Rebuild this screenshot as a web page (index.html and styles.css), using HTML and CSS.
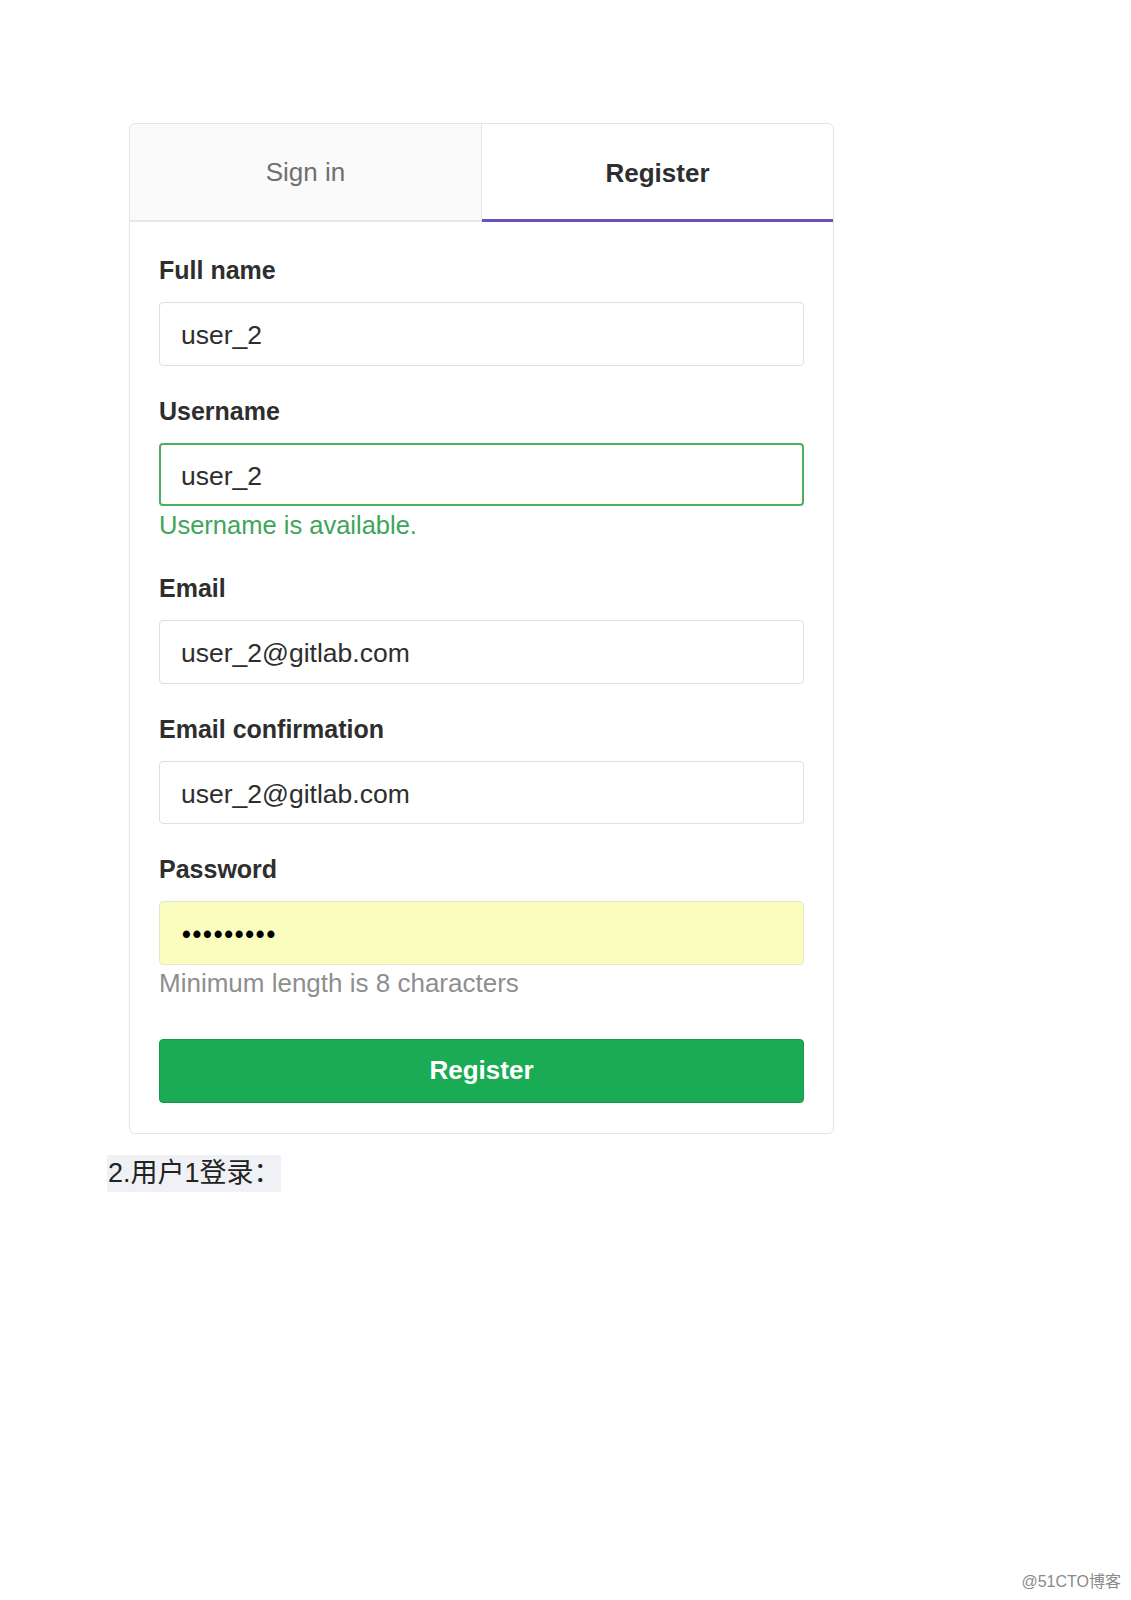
FILE: index.html
```html
<!DOCTYPE html>
<html lang="zh-CN">
<head>
<meta charset="utf-8">
<title>Register</title>
<link rel="stylesheet" href="styles.css">
</head>
<body>
<div class="page">
  <div class="card">
    <div class="tabs">
      <div class="tab tab-inactive">Sign in</div>
      <div class="tab tab-active">Register</div>
    </div>
    <form class="form">
      <div class="group">
        <label class="label">Full name</label>
        <input class="input" type="text" value="user_2">
      </div>
      <div class="group group-help">
        <label class="label">Username</label>
        <input class="input input-ok" type="text" value="user_2">
        <p class="help help-ok">Username is available.</p>
      </div>
      <div class="group">
        <label class="label">Email</label>
        <input class="input" type="text" value="user_2@gitlab.com">
      </div>
      <div class="group">
        <label class="label">Email confirmation</label>
        <input class="input" type="text" value="user_2@gitlab.com">
      </div>
      <div class="group group-last">
        <label class="label">Password</label>
        <div class="input input-auto"><span class="dots">•••••••••</span></div>
        <p class="help help-muted">Minimum length is 8 characters</p>
      </div>
      <button class="btn" type="button">Register</button>
    </form>
  </div>
  <p class="note">2.用户1登录：</p>
  <div class="footer">@51CTO博客</div>
</div>
</body>
</html>
```

FILE: styles.css
```css
html, body {
  margin: 0;
  padding: 0;
  background: #ffffff;
}

body {
  font-family: "Liberation Sans", Arial, "Noto Sans CJK SC", sans-serif;
  color: #2e2e2e;
}

.page {
  min-height: 1600px;
  box-sizing: border-box;
  display: flex;
  flex-direction: column;
  align-items: flex-start;
  padding: 123px 0 0 107px;
}

.card {
  width: 705px;
  box-sizing: border-box;
  margin-left: 22px;
  border: 1px solid #e5e5e5;
  border-radius: 6px;
  box-shadow: 0 0 2px rgba(0, 0, 0, 0.04);
  background: #fff;
}

.tabs {
  display: flex;
}

.tab {
  flex: 1;
  height: 98px;
  box-sizing: border-box;
  display: flex;
  align-items: center;
  justify-content: center;
  font-size: 26px;
}

.tab-inactive {
  background: #fafafa;
  color: #707070;
  border-right: 1px solid #e5e5e5;
  border-bottom: 2px solid #e8e8e8;
  border-top-left-radius: 5px;
}

.tab-active {
  color: #2e2e2e;
  font-weight: bold;
  border-bottom: 3px solid #6b4fbb;
  border-top-right-radius: 5px;
  padding-top: 3px;
}

.form {
  margin: 0;
  padding: 33px 29px 30px 29px;
}

.group {
  margin-bottom: 30px;
}

.group-help {
  margin-bottom: 33px;
}

.group-last {
  margin-bottom: 41px;
}

.label {
  display: block;
  font-size: 25px;
  font-weight: bold;
  line-height: 30px;
  margin-bottom: 17px;
  color: #2e2e2e;
}

.input {
  display: flex;
  align-items: center;
  width: 100%;
  height: 63.5px;
  box-sizing: border-box;
  margin: 0;
  border: 1px solid #dfdfdf;
  border-radius: 4px;
  padding: 4px 21px 0 21px;
  font-family: "Liberation Sans", Arial, sans-serif;
  font-size: 26.5px;
  color: #2e2e2e;
  background: #fff;
  outline: none;
}

.input-ok {
  border: 2px solid #4fae62;
  padding: 4px 20px 0 20px;
}

.input-auto {
  background: #fafdbd;
  border-color: #e6e6c8;
}

.dots {
  font-size: 25px;
  font-weight: bold;
  letter-spacing: 1.8px;
  color: #000;
  margin-left: 1px;
}

.help {
  margin: 4px 0 0 0;
  font-size: 25.5px;
  line-height: 30px;
}

.help-ok {
  color: #3ea55a;
}

.help-muted {
  color: #8e8e8e;
  margin-top: 3px;
  font-size: 26px;
}

.btn {
  display: block;
  width: 100%;
  height: 64px;
  margin: 0;
  background: #1cab55;
  border: 1px solid #17994b;
  border-radius: 4px;
  color: #fff;
  font-family: "Liberation Sans", Arial, sans-serif;
  font-size: 26px;
  font-weight: bold;
}

.note {
  margin: 21px 0 0 0;
  padding: 0 0 0 1px;
  background: #f0f1f4;
  font-family: "Liberation Sans", "Noto Sans CJK SC", sans-serif;
  font-size: 27px;
  line-height: 37px;
  color: #222;
}

.footer {
  margin-top: auto;
  align-self: flex-end;
  padding: 0 10px 9px 0;
  font-family: "Liberation Sans", "Noto Sans CJK SC", sans-serif;
  font-size: 16px;
  line-height: 18px;
  color: #8a8a8a;
}
```
